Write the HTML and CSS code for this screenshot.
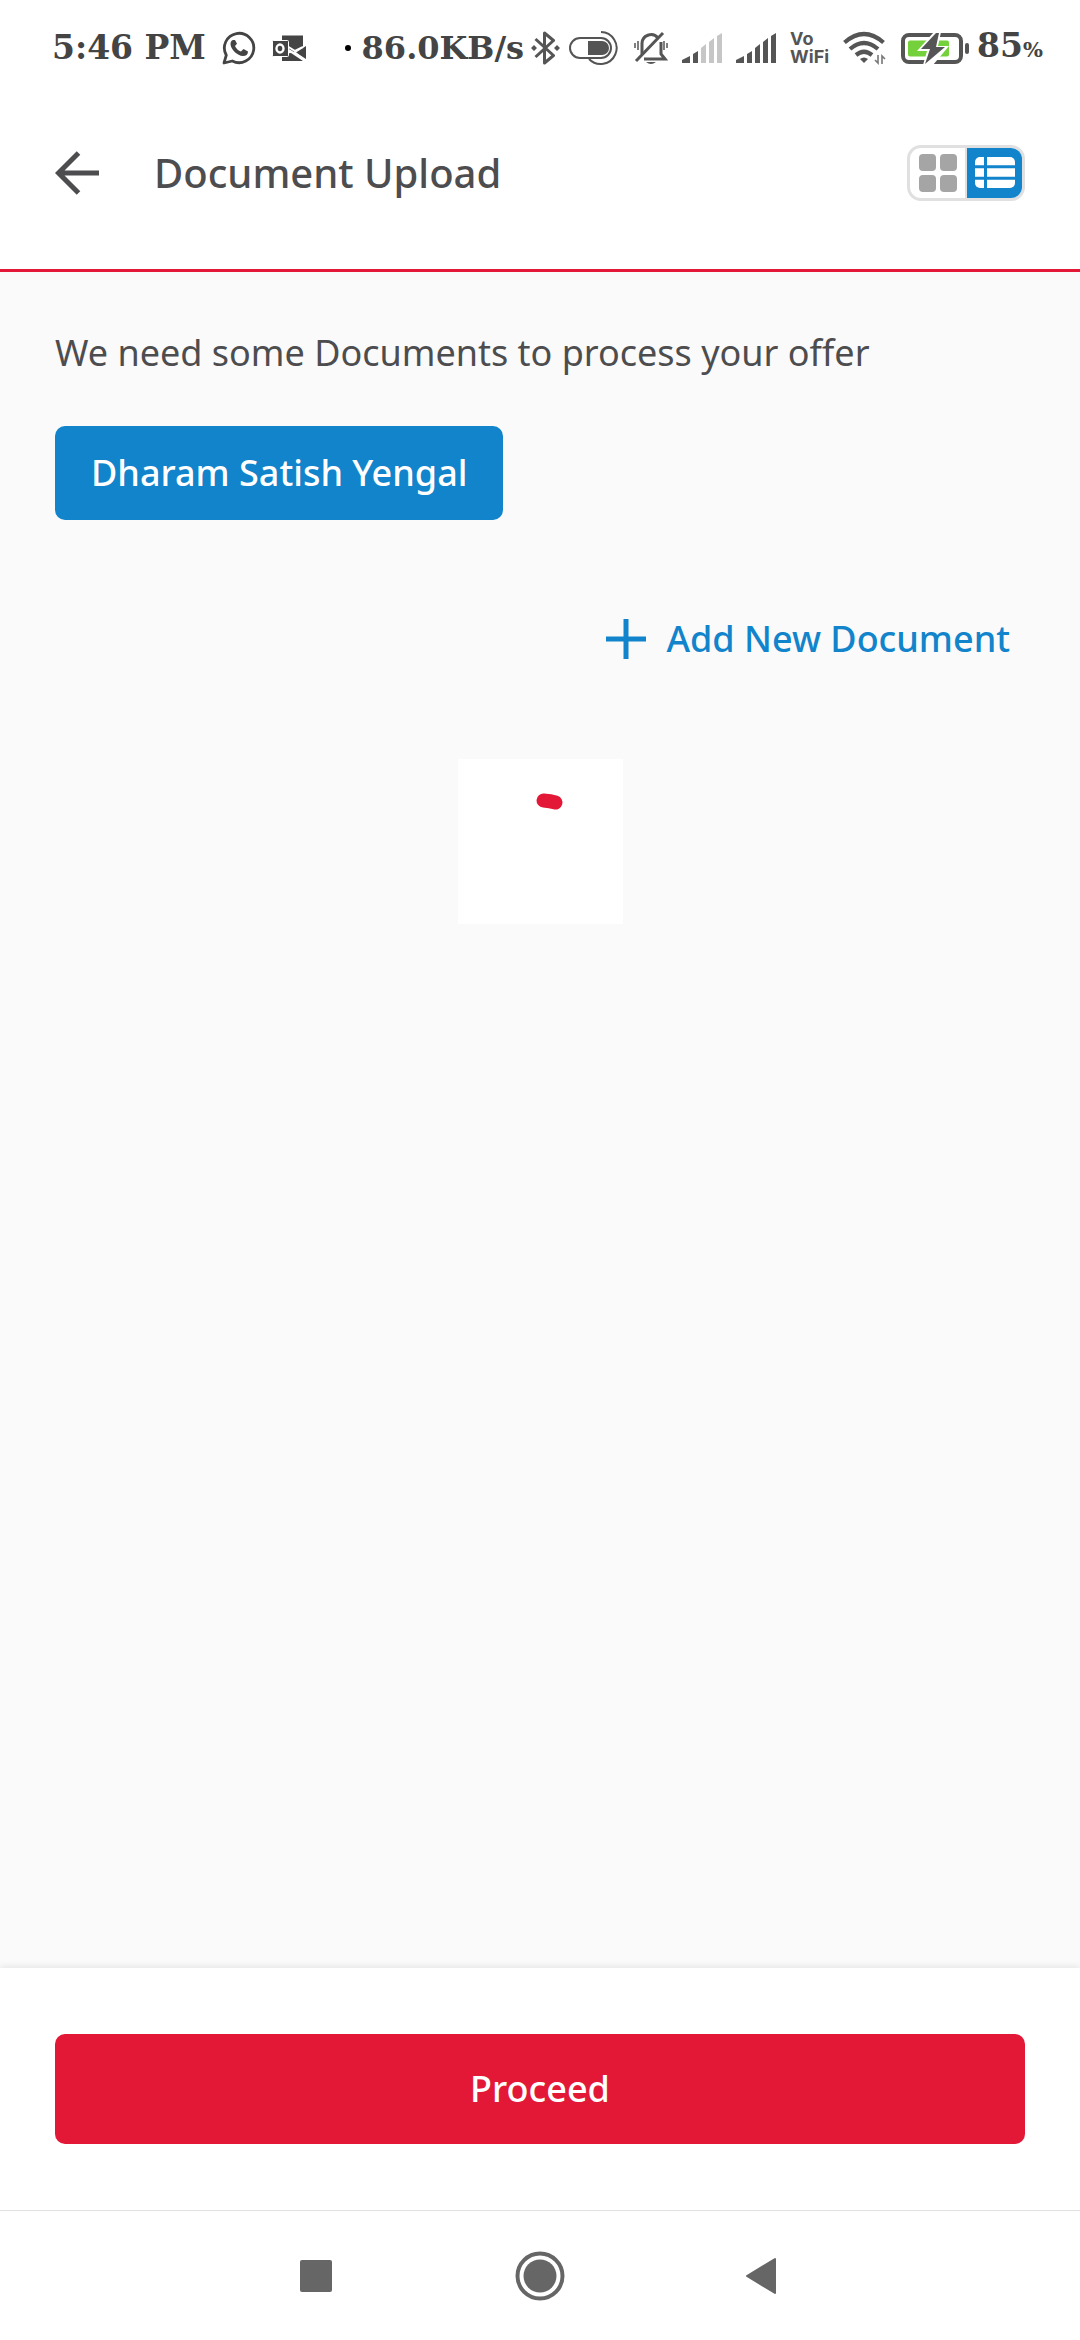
FILE: index.html
```html
<!DOCTYPE html>
<html lang="en">
<head>
<meta charset="utf-8">
<meta name="viewport" content="width=device-width">
<title>Document Upload</title>
<link rel="stylesheet" href="styles.css">
</head>
<body>
<div class="status">
  <div class="status-group">
    <span class="clock">5:46 PM</span>
    <svg width="34" height="34" viewBox="0 0 34 34"><path d="M2 32 4.300 24.200A14.700 14.700 0 1 1 10.300 30Z" fill="none" stroke="#444" stroke-width="2.800" stroke-linejoin="round"/><path d="M11.500 9c-2 0-3 2-3 4 0 5 7 12 12.500 12 3 0 5-1.500 5-4.500l-4.500-2.500-2.500 2.500c-2.500-.8-5-3-6-5.500l2-2.200-2-3.800z" fill="#444"/></svg>
    <svg width="34" height="28" viewBox="0 0 34 28"><path d="M10 1.500h21V14l-9 4-12-7zM10 20l9-1 12 8H10z M34 12v13l-10-6.500z" fill="#444"/><path d="M15 12l8 5 8-4M22 18l10 8" stroke="#fff" stroke-width="2" fill="none"/><rect x=".5" y="6.500" width="16" height="16" rx="1" fill="#444" stroke="#fff"/><ellipse cx="8" cy="14.500" rx="3.500" ry="4" fill="none" stroke="#fff" stroke-width="2.400"/></svg>
  </div>
  <div class="status-group status-right">
    <div class="status-group tight">
      <svg class="dot" width="6" height="6" viewBox="0 0 6 6"><circle cx="3" cy="3" r="3"/></svg>
      <span class="speed">86.0KB/s</span>
      <svg width="29" height="34" viewBox="0 0 29 34"><path d="M4.500 8 22.500 24.500 13.500 32V2l9 7.500L4.500 26" fill="none" stroke="#555" stroke-width="3" stroke-linejoin="round"/><path d="M3 14l3 3-3 3-3-3zM26 14l3 3-3 3-3-3z" fill="#555"/></svg>
      <svg width="53" height="36" viewBox="0 0 53 36"><rect x="3" y="8" width="41" height="20" rx="10" fill="none" stroke="#555" stroke-width="2"/><path d="M21 11h14a7 7 0 0 1 0 14H21z" fill="#555"/><path d="M34 2a16 16 0 1 1-12 27" fill="none" stroke="#555" stroke-width="2"/></svg>
    </div>
    <svg width="34" height="34" viewBox="0 0 34 34"><path d="M8 23V13a9 9 0 0 1 16-6M27 11v12l4 5H10" fill="none" stroke="#555" stroke-width="3"/><path d="M2 30 29 2" stroke="#555" stroke-width="3"/><path d="M12 31h10q-5 4-10 0z" fill="#555"/><path d="M4 10v9M1 12v5M30 10v9M33 12v5" stroke="#555" stroke-width="1.500"/></svg>
    <svg width="40" height="30" viewBox="0 0 40 30"><path d="M0 30v-3l8-4v7zM11 30V21l5-3v12z" fill="#555"/><path d="M19 30V15l5-4v19zM27 30V9l5-4v25zM35 30V3l5-3v30z" fill="#c6c6c6"/></svg>
    <svg width="40" height="30" viewBox="0 0 40 30"><path d="M0 30v-3l8-4v7zM11 30V21l5-3v12zM19 30V15l5-4v19zM27 30V9l5-4v25zM35 30V3l5-3v30z" fill="#555"/></svg>
    <span class="vowifi">Vo<br>WiFi</span>
    <svg width="43" height="34" viewBox="0 0 43 34"><path d="M1.500 11.500q19.500-17 39 0M7 18q14-12 28 0M13 24q8-6.500 16 0" fill="none" stroke="#555" stroke-width="4.200"/><path d="M17 28q4-3 8 0l-4 4z" fill="#555"/><path d="M35 24v8l-3-3M39 33v-8l3 3" fill="none" stroke="#777" stroke-width="1.600"/></svg>
    <div class="status-group tight">
      <svg width="70" height="31" viewBox="0 0 70 31"><rect x="3" y="2" width="58" height="27" rx="6" fill="none" stroke="#555" stroke-width="4"/><rect x="8" y="7.500" width="41" height="16" rx="2" fill="#75d13b"/><rect x="65" y="10" width="4" height="11" rx="2" fill="#555"/><path d="M34-1 17 18h10l-4 14h10L49 13H38l3-14z" fill="#fff"/><path d="M36 0 21 16h9l-5 15L45 14h-9l3-14z" fill="#555"/></svg>
      <span class="battery">85<small>%</small></span>
    </div>
  </div>
</div>
<header class="header">
  <button class="icon-button" type="button" aria-label="Back"><svg width="44" height="44" viewBox="0 0 44 44"><path d="M23.500 2 3.500 22l20 20M3 22h41" fill="none" stroke="#4d4d4f" stroke-width="5"/></svg></button>
  <h1>Document Upload</h1>
  <div class="views">
    <button class="view" type="button" aria-label="Grid view"><svg width="38" height="38" viewBox="0 0 38 38" fill="#a5a5a5"><rect width="17" height="17" rx="4"/><rect x="21" width="17" height="17" rx="4"/><rect y="21" width="17" height="17" rx="4"/><rect x="21" y="21" width="17" height="17" rx="4"/></svg></button>
    <button class="view selected" type="button" aria-label="List view"><svg width="40" height="31" viewBox="0 0 40 31"><rect width="40" height="31" rx="5" fill="#fff"/><path d="M10.500 0v31M0 9.700h40M0 21.300h40" stroke="#1184cb" stroke-width="3"/></svg></button>
  </div>
</header>
<main class="content">
  <p class="intro">We need some Documents to process your offer</p>
  <button class="person" type="button">Dharam Satish Yengal</button>
  <button class="add" type="button"><svg width="40" height="40" viewBox="0 0 40 40"><path d="M20 0v40M0 20h40" stroke="#1184cb" stroke-width="5"/></svg>Add New Document</button>
  <div class="loader" role="status" aria-label="Loading"><svg width="165" height="165" viewBox="0 0 165 165"><path d="M85.500 41.500q7 .5 12 2" fill="none" stroke="#e31837" stroke-width="14" stroke-linecap="round"/></svg></div>
</main>
<footer class="footer"><button class="proceed" type="button">Proceed</button></footer>
<nav class="nav">
  <button class="icon-button" type="button" aria-label="Recent apps"><svg width="50" height="50" viewBox="0 0 50 50"><rect x="9" y="9" width="32" height="32" rx="2" fill="#666"/></svg></button>
  <button class="icon-button" type="button" aria-label="Home"><svg width="50" height="50" viewBox="0 0 50 50"><circle cx="25" cy="25" r="22.500" fill="none" stroke="#666" stroke-width="4"/><circle cx="25" cy="25" r="16.500" fill="#666"/></svg></button>
  <button class="icon-button" type="button" aria-label="Back"><svg width="50" height="50" viewBox="0 0 50 50"><path d="M8 25 36 8v34z" fill="#666" stroke="#666" stroke-width="2" stroke-linejoin="round"/></svg></button>
</nav>
</body>
</html>
```
FILE: styles.css
```css
* { box-sizing: border-box; }
body {
  margin: 0;
  min-height: 100vh;
  display: flex;
  flex-direction: column;
  background: #fff;
  color: #4d4d4f;
  font-family: "Noto Sans", sans-serif;
  font-size: 36px;
  line-height: 54px;
}
svg { display: block; flex: none; }
button {
  border: 0;
  padding: 0;
  background: none;
  color: inherit;
  font: inherit;
  font-weight: 500;
}
.status {
  height: 96px;
  padding: 0 37px 0 52px;
  display: flex;
  align-items: center;
  justify-content: space-between;
  color: #444;
  font: bold 33px/40px "DejaVu Serif", serif;
  white-space: nowrap;
}
.status-group { display: flex; align-items: center; gap: 16px; }
.status-right { gap: 14px; }
.status-group.tight { gap: 7px; }
.dot { margin-right: 4px; }
.speed { font-size: 32px; }
.battery small { font-size: 21px; }
.vowifi { font: bold 18px/18px Inter, sans-serif; color: #555; }
.header {
  height: 176px;
  padding: 0 55px 20px;
  display: flex;
  align-items: center;
  border-bottom: 3px solid #e31837;
}
h1 {
  margin: 0 auto 0 55px;
  font-size: 40px;
  font-weight: 500;
}
.views {
  display: flex;
  height: 56px;
  border: 3px solid #e0e0e0;
  border-radius: 14px;
  overflow: hidden;
}
.view { width: 55px; display: grid; place-items: center; }
.view.selected { background: #1184cb; }
.view + .view { box-sizing: content-box; border-left: 2px solid #e0e0e0; }
.content {
  flex: 1;
  padding: 54px 55px;
  display: flex;
  flex-direction: column;
  align-items: flex-start;
  background: #fafafa;
}
.intro { margin: 0; }
.person {
  margin-top: 46px;
  padding: 20px 36px;
  border-radius: 10px;
  background: #1184cb;
  color: #fff;
}
.add {
  align-self: flex-end;
  margin: 92px 15px 0 0;
  display: flex;
  align-items: center;
  gap: 20px;
  color: #1184cb;
}
.loader { margin: 93px auto 0; background: #fff; }
.footer {
  padding: 66px 55px;
  background: #fff;
  box-shadow: 0 -2px 6px rgb(0 0 0 / 8%);
}
.proceed {
  width: 100%;
  padding: 28px;
  border-radius: 10px;
  background: #e31837;
  color: #fff;
}
.nav {
  height: 130px;
  border-top: 1px solid #e2e2e2;
  display: flex;
  align-items: center;
  justify-content: center;
  gap: 174px;
}
```
